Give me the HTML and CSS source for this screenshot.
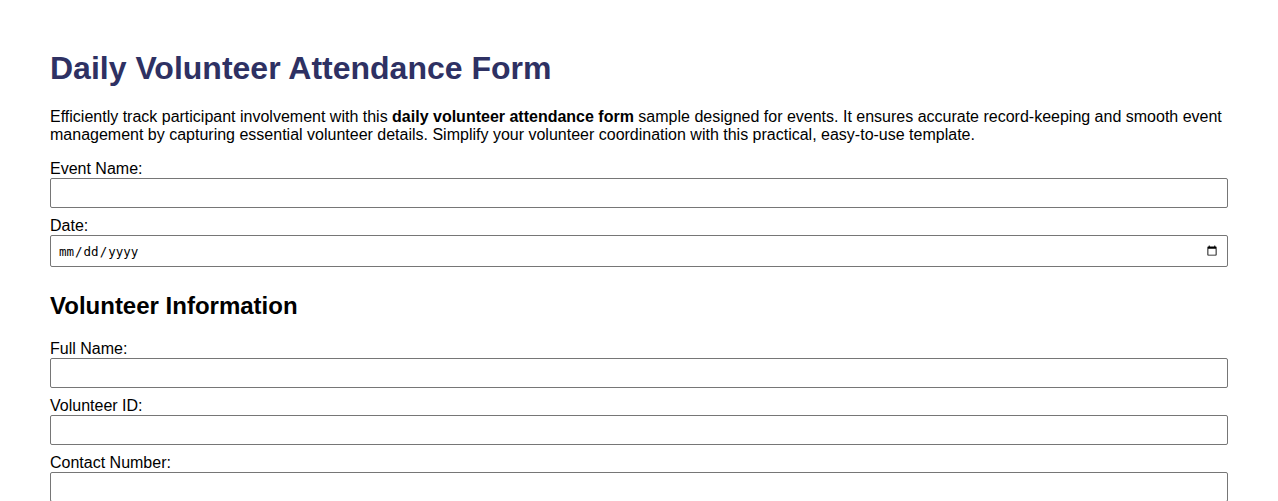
FILE: index.html
```html
<!DOCTYPE html>
<html lang="en">
<head>
<meta charset="utf-8">
<title>Daily Volunteer Attendance Form</title>
<link rel="stylesheet" href="styles.css">
</head>
<body>
<div class="page">
  <h1 class="title">Daily Volunteer Attendance Form</h1>
  <p class="intro">Efficiently track participant involvement with this <strong>daily volunteer attendance form</strong> sample designed for events. It ensures accurate record-keeping and smooth event management by capturing essential volunteer details. Simplify your volunteer coordination with this practical, easy-to-use template.</p>
  <form class="form">
    <label class="label" for="event">Event Name:</label>
    <input class="field" type="text" id="event">
    <label class="label" for="date">Date:</label>
    <input class="field field-date" type="date" id="date">
    <h2 class="section">Volunteer Information</h2>
    <label class="label" for="name">Full Name:</label>
    <input class="field" type="text" id="name">
    <label class="label" for="vid">Volunteer ID:</label>
    <input class="field" type="text" id="vid">
    <label class="label" for="phone">Contact Number:</label>
    <input class="field" type="tel" id="phone">
  </form>
</div>
</body>
</html>
```

FILE: styles.css
```css
html, body {
  margin: 0;
  padding: 0;
  background: #ffffff;
}

body {
  font-family: "Liberation Sans", Arial, sans-serif;
  font-size: 16px;
  color: #000000;
}

.page {
  padding: 29px 50px 0 50px;
}

.title {
  font-size: 32px;
  font-weight: bold;
  color: #2e3163;
  margin: 21px 0 21px 0;
}

.intro {
  margin: 0 0 16px 0;
  line-height: 18px;
}

.form {
  display: block;
}

.label {
  display: block;
  line-height: 18px;
}

.field {
  display: block;
  box-sizing: border-box;
  width: 100%;
  height: 30px;
  margin: 0 0 9px 0;
  padding: 4px 6px;
  border: 1px solid #767676;
  border-radius: 2px;
  background: #ffffff;
  font-family: "Liberation Sans", Arial, sans-serif;
  font-size: 16px;
}

.field-date {
  height: 32px;
  padding: 4px 7px;
  font-family: "DejaVu Sans Mono", monospace;
  font-size: 12.5px;
  color: #000000;
}

.section {
  font-size: 24px;
  font-weight: bold;
  margin: 25px 0 20px 0;
}
```
